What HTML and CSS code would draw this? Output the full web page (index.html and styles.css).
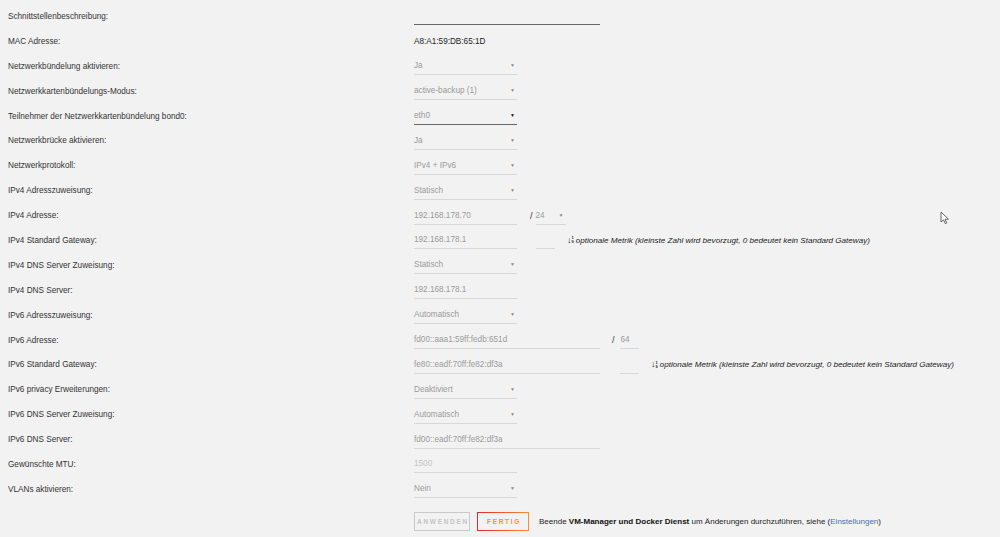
FILE: index.html
```html
<!DOCTYPE html>
<html lang="de">
<head>
    <meta charset="UTF-8">
    <meta name="viewport" content="width=device-width, initial-scale=1.0">
    <title>Netzwerkeinstellungen</title>
    <link rel="stylesheet" href="styles.css">
</head>
<body>
<div class="form">
    <div class="row">
        <div class="label">Schnittstellenbeschreibung:</div>
        <div class="field wide active"></div>
    </div>
    <div class="row">
        <div class="label">MAC Adresse:</div>
        <div class="mac">A8:A1:59:DB:65:1D</div>
    </div>
    <div class="row">
        <div class="label">Netzwerkbündelung aktivieren:</div>
        <div class="field select">Ja</div>
    </div>
    <div class="row">
        <div class="label">Netzwerkkartenbündelungs-Modus:</div>
        <div class="field select">active-backup (1)</div>
    </div>
    <div class="row">
        <div class="label">Teilnehmer der Netzwerkkartenbündelung bond0:</div>
        <div class="field select active">eth0</div>
    </div>
    <div class="row">
        <div class="label">Netzwerkbrücke aktivieren:</div>
        <div class="field select">Ja</div>
    </div>
    <div class="row">
        <div class="label">Netzwerkprotokoll:</div>
        <div class="field select">IPv4 + IPv6</div>
    </div>
    <div class="row">
        <div class="label">IPv4 Adresszuweisung:</div>
        <div class="field select">Statisch</div>
    </div>
    <div class="row">
        <div class="label">IPv4 Adresse:</div>
        <div class="field">192.168.178.70</div>
        <span class="slash">/</span>
        <div class="field select mask">24</div>
    </div>
    <div class="row">
        <div class="label">IPv4 Standard Gateway:</div>
        <div class="field">192.168.178.1</div>
        <div class="field metric metric4"></div>
        <span class="hint">
            <span class="sorticon"><span class="arrow">&#8595;</span><span class="nums"><i>1</i><i>9</i></span></span>
            optionale Metrik (kleinste Zahl wird bevorzugt, 0 bedeutet kein Standard Gateway)
        </span>
    </div>
    <div class="row">
        <div class="label">IPv4 DNS Server Zuweisung:</div>
        <div class="field select">Statisch</div>
    </div>
    <div class="row">
        <div class="label">IPv4 DNS Server:</div>
        <div class="field">192.168.178.1</div>
    </div>
    <div class="row">
        <div class="label">IPv6 Adresszuweisung:</div>
        <div class="field select">Automatisch</div>
    </div>
    <div class="row">
        <div class="label">IPv6 Adresse:</div>
        <div class="field wide">fd00::aaa1:59ff:fedb:651d</div>
        <span class="slash">/</span>
        <div class="field prefix">64</div>
    </div>
    <div class="row">
        <div class="label">IPv6 Standard Gateway:</div>
        <div class="field wide">fe80::eadf:70ff:fe82:df3a</div>
        <div class="field metric"></div>
        <span class="hint">
            <span class="sorticon"><span class="arrow">&#8595;</span><span class="nums"><i>1</i><i>9</i></span></span>
            optionale Metrik (kleinste Zahl wird bevorzugt, 0 bedeutet kein Standard Gateway)
        </span>
    </div>
    <div class="row">
        <div class="label">IPv6 privacy Erweiterungen:</div>
        <div class="field select">Deaktiviert</div>
    </div>
    <div class="row">
        <div class="label">IPv6 DNS Server Zuweisung:</div>
        <div class="field select">Automatisch</div>
    </div>
    <div class="row">
        <div class="label">IPv6 DNS Server:</div>
        <div class="field wide">fd00::eadf:70ff:fe82:df3a</div>
    </div>
    <div class="row">
        <div class="label">Gewünschte MTU:</div>
        <div class="field disabled">1500</div>
    </div>
    <div class="row">
        <div class="label">VLANs aktivieren:</div>
        <div class="field select">Nein</div>
    </div>
    <div class="row buttons">
        <div class="label"></div>
        <button class="btn" disabled>Anwenden</button>
        <button class="btn done">Fertig</button>
        <span class="note">Beende <b>VM-Manager und Docker Dienst</b> um Änderungen durchzuführen, siehe (<a href="#">Einstellungen</a>)</span>
    </div>
</div>
<svg class="cursor" width="10" height="14" viewBox="0 0 10 14">
    <path d="M1 1 L1 11 L3.5 8.8 L5.3 12.6 L6.8 11.9 L5 8.3 L8.4 8.1 Z" fill="#fff" stroke="#555" stroke-width="0.9" stroke-linejoin="round"/>
</svg>
</body>
</html>
```

FILE: styles.css
```css
body {
    margin: 0;
    background: #f2f2f2;
    font-family: "Liberation Sans", Arial, sans-serif;
    font-size: 8.2px;
    color: #333;
}
.form {
    padding: 4px 0 0 8px;
}
.row {
    display: flex;
    align-items: center;
    height: 24.9px;
}
.label {
    width: 406px;
    flex: none;
}
.mac {
    color: #1c1c1c;
}
.field {
    position: relative;
    box-sizing: border-box;
    width: 103px;
    height: 18px;
    line-height: 17px;
    border-bottom: 1px solid #d8d8d8;
    color: #9a9a9a;
    flex: none;
}
.field.wide {
    width: 186px;
}
.field.active {
    border-bottom-color: #666;
}
.field.disabled {
    color: #c4c4c4;
}
.select::after {
    content: "\25BC";
    position: absolute;
    right: 2px;
    top: 0;
    font-size: 5px;
    color: #8a8a8a;
}
.select.active::after {
    color: #111;
}
.slash {
    color: #333;
    font-size: 9px;
    margin: 0 3px 0 13px;
}
.mask {
    width: 30px;
}
.metric {
    width: 19px;
    margin-left: 20px;
}
.metric4 {
    margin-left: 19px;
}
.field.wide + .slash {
    margin-left: 12px;
    margin-right: 5px;
}
.prefix {
    width: 19px;
    padding-left: 1px;
}
.hint {
    margin-left: 12px;
    font-style: italic;
    font-size: 8.1px;
    color: #222;
    display: flex;
    align-items: center;
    white-space: nowrap;
}
.sorticon {
    display: inline-flex;
    align-items: center;
    font-style: normal;
    margin-right: 2px;
    color: #222;
}
.arrow {
    font-size: 9px;
    font-weight: bold;
    line-height: 9px;
}
.nums {
    display: flex;
    flex-direction: column;
    font-size: 4px;
    line-height: 4px;
    font-weight: bold;
}
.nums i {
    font-style: normal;
}
.buttons {
    height: auto;
    margin-top: 10px;
}
.btn {
    font-family: "Liberation Sans", Arial, sans-serif;
    font-size: 6.5px;
    font-weight: bold;
    letter-spacing: 1.7px;
    text-transform: uppercase;
    height: 19px;
    padding: 0 0 0 2px;
    background: transparent;
    margin: 0 7px 0 0;
}
.btn[disabled] {
    width: 56px;
    border: 1px solid #c9c9c9;
    color: #c4c4c4;
}
.btn.done {
    width: 52px;
    border: 1px solid;
    border-image: linear-gradient(90deg, #e22828, #ff8c2f) 1;
    color: #ff8c2f;
    margin-right: 10px;
}
.note {
    font-size: 8px;
    color: #222;
}
.note b {
    color: #111;
}
.note a {
    color: #486dba;
    text-decoration: none;
}
.cursor {
    position: absolute;
    left: 940px;
    top: 211px;
}
```
